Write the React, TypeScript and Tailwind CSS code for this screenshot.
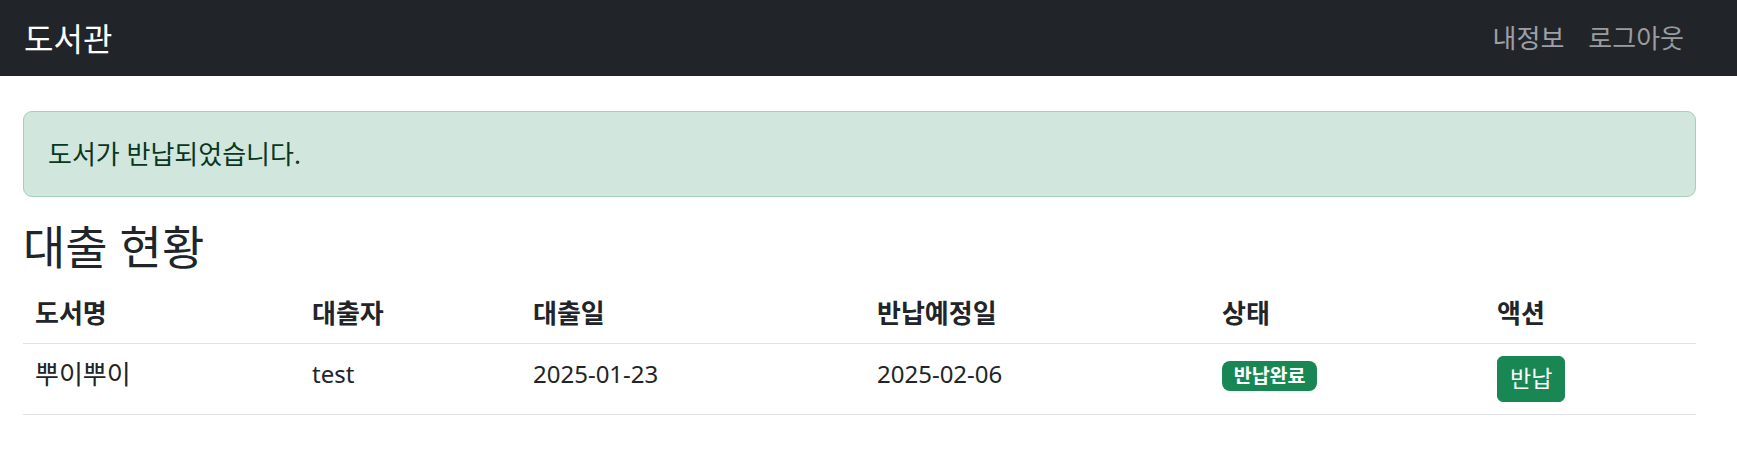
import React from "react";

interface Loan {
  title: string;
  borrower: string;
  loanDate: string;
  dueDate: string;
  status: string;
}

const loans: Loan[] = [
  {
    title: "뿌이뿌이",
    borrower: "test",
    loanDate: "2025-01-23",
    dueDate: "2025-02-06",
    status: "반납완료",
  },
];

const font = {
  fontFamily: '"Noto Sans", "Noto Sans CJK KR", sans-serif',
};

const ko = "text-[26px] leading-[36px]";

function Navbar() {
  return (
    <nav className="h-[76px] bg-[#212529] flex items-center pl-[24px] pr-[41px]">
      <a className="text-[32px] leading-[45px] text-white">도서관</a>
      <div className="ml-auto flex items-center text-[26px] leading-[36px]">
        <a className="px-[12px] text-[#a09ea6]">내정보</a>
        <a className="px-[12px] text-[#9a9c9e]">로그아웃</a>
      </div>
    </nav>
  );
}

function App() {
  return (
    <div
      className="min-h-[449px] bg-white text-[#212529] text-[24px] leading-[36px]"
      style={font}
    >
      <Navbar />

      <main className="pl-[23px] pr-[41px] pt-[35px]">
        {/* Flash message */}
        <div
          className={`mb-[24px] rounded-[9px] border border-[#a3cfbb] bg-[#d1e7dd] p-[24px] text-[#0a3622] ${ko}`}
        >
          도서가 반납되었습니다.
        </div>

        <h3 className="mb-[12px] text-[46px] leading-[50px] font-normal">
          대출 현황
        </h3>

        <table className="w-full table-fixed border-collapse text-left">
          <thead>
            <tr className={`border-b border-[#dee2e6] ${ko}`}>
              <th className="w-[277px] p-[12px] font-bold">도서명</th>
              <th className="w-[221px] p-[12px] font-bold">대출자</th>
              <th className="w-[344px] p-[12px] font-bold">대출일</th>
              <th className="w-[345px] p-[12px] font-bold">반납예정일</th>
              <th className="w-[275px] p-[12px] font-bold">상태</th>
              <th className="p-[12px] font-bold">액션</th>
            </tr>
          </thead>
          <tbody>
            {loans.map((loan) => (
              <tr key={loan.title} className="border-b border-[#dee2e6]">
                <td className={`p-[12px] align-top ${ko}`}>{loan.title}</td>
                <td className="p-[12px] align-top">{loan.borrower}</td>
                <td className="p-[12px] align-top">{loan.loanDate}</td>
                <td className="p-[12px] align-top">{loan.dueDate}</td>
                <td className="p-[12px] align-top">
                  <span className="inline-block rounded-[8px] bg-[#198754] px-[11.7px] py-[6.3px] align-baseline text-[19.5px] leading-[18px] font-bold text-white">
                    {loan.status}
                  </span>
                </td>
                <td className="p-[12px] align-top">
                  <button className="rounded-[6px] border border-[#198754] bg-[#198754] px-[12px] py-[6px] text-[23px] leading-[31.5px] text-white">
                    반납
                  </button>
                </td>
              </tr>
            ))}
          </tbody>
        </table>
      </main>
    </div>
  );
}

export default App;
